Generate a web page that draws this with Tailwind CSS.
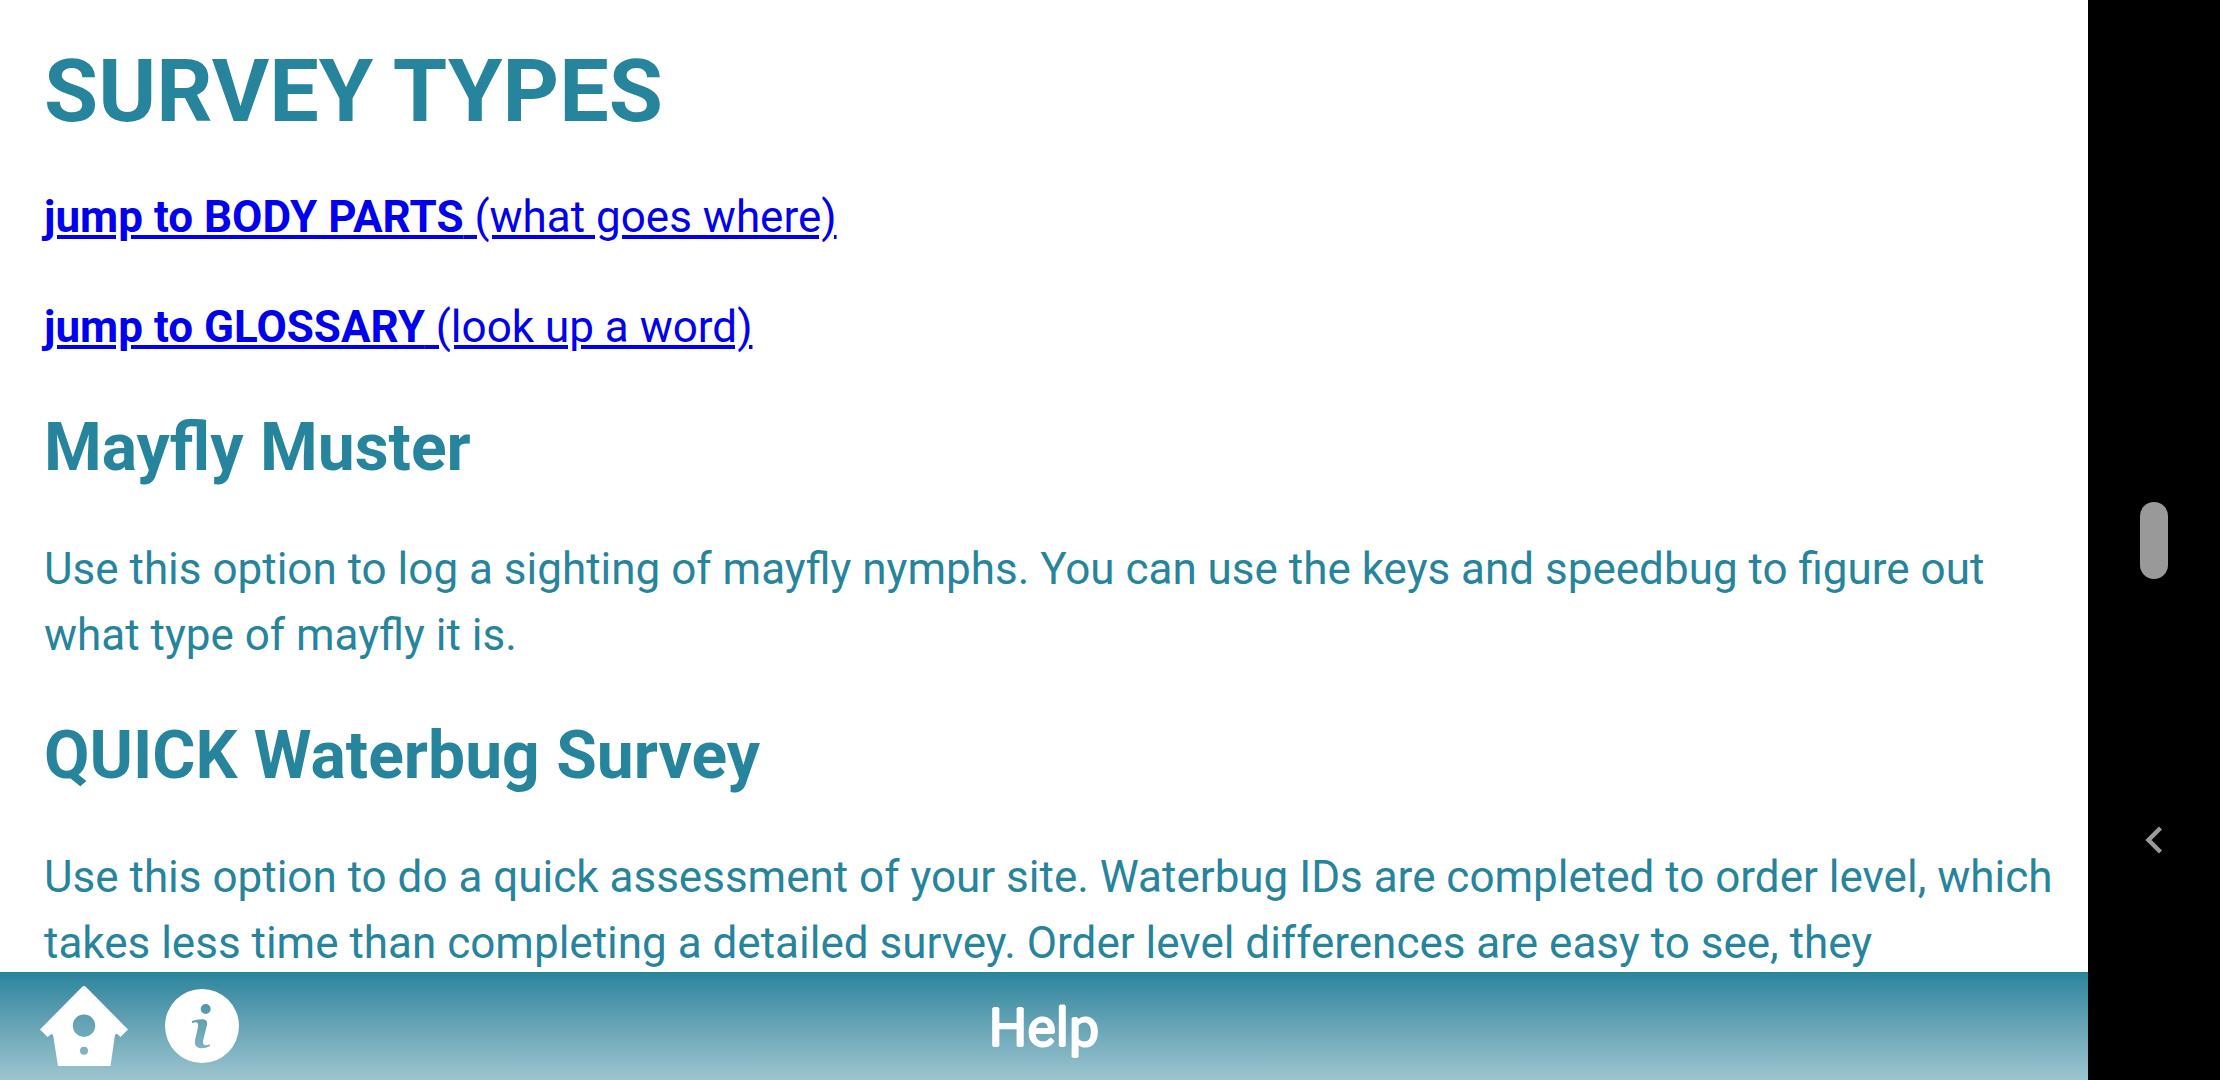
<!DOCTYPE html>
<html lang="en">
<head>
<meta charset="utf-8">
<meta name="viewport" content="width=device-width, initial-scale=1">
<title>Help</title>
<script src="https://cdn.jsdelivr.net/npm/@tailwindcss/browser@4"></script>
</head>
<body class="flex h-screen overflow-hidden bg-black font-['Roboto',sans-serif]">
<div class="flex min-w-0 flex-1 flex-col bg-white">
  <main class="min-h-0 flex-1 overflow-hidden pt-9 pr-8 pl-11 text-[44px] leading-[66px] text-[#27849d]">
    <h1 class="mb-[38px] text-[88px] leading-[110px] font-bold">SURVEY TYPES</h1>
    <p class="mb-11 text-[#0000ee]"><a href="#body-parts" class="underline"><b>jump to BODY PARTS</b> (what goes where)</a></p>
    <p class="mb-11 text-[#0000ee]"><a href="#glossary" class="underline"><b>jump to GLOSSARY</b> (look up a word)</a></p>
    <h2 class="mb-11 text-[66px] leading-[88px] font-bold">Mayfly Muster</h2>
    <p class="mb-11">Use this option to log a sighting of mayfly nymphs. You can use the keys and speedbug to figure out what type of mayfly it is.</p>
    <h2 class="mb-11 text-[66px] leading-[88px] font-bold">QUICK Waterbug Survey</h2>
    <p>Use this option to do a quick assessment of your site. Waterbug IDs are completed to order level, which takes less time than completing a detailed survey. Order level differences are easy to see, they</p>
  </main>
  <footer class="grid h-27 shrink-0 grid-cols-[1fr_auto_1fr] items-center bg-linear-to-b from-[#27849d] to-[#9cc5cf] px-10 text-white">
    <nav class="flex items-center gap-9">
      <button type="button" aria-label="Home">
        <svg class="h-20 w-[88px]" viewBox="0 0 88 80" fill="currentColor" fill-rule="evenodd" aria-hidden="true">
          <path d="M42 1Q44-1 46 1L88 43.500 80.500 51 76.500 47.500Q75 48 74.800 50L70.500 80H18L13.200 50Q13 48 11.500 48L7.500 51 0 43.500ZM44 28.500a11.200 11.200 0 1 0 0 22.400a11.200 11.200 0 1 0 0-22.400ZM44 60.700a4 4 0 1 0 0 8a4 4 0 1 0 0-8Z"/>
        </svg>
      </button>
      <button type="button" aria-label="Information">
        <svg class="h-[76px] w-[76px]" viewBox="0 0 76 76" fill="currentColor" fill-rule="evenodd" aria-hidden="true">
          <path d="M38 1a37 37 0 1 0 0 74a37 37 0 1 0 0-74ZM41.700 16a5 5 0 1 1 0 10a5 5 0 1 1 0-10ZM28 33Q33 31 39 31.200Q44 31.600 43 37L39 53Q38.500 57 41 57.300Q43.500 57.500 45.800 56.300L46 58Q42 60.300 37 60.200Q29.500 60 31.200 51.500L34 39Q34.600 34.500 32 34.300L28 35Z"/>
        </svg>
      </button>
    </nav>
    <div class="pt-1 text-[54px] leading-[66px] [text-shadow:0_1px_0_#fff,0_-1px_0_#fff,1px_0_0_#fff,-1px_0_0_#fff]">Help</div>
  </footer>
</div>
<aside class="grid w-33 shrink-0 grid-rows-[13fr_10fr_10fr_3fr] place-items-center bg-black text-[#999999]">
  <button type="button" aria-label="Home screen" class="row-start-2 h-[77px] w-7 rounded-full bg-[#999999]"></button>
  <button type="button" aria-label="Back" class="row-start-3">
    <svg class="h-7 w-[18px]" viewBox="0 0 18 28" fill="none" stroke="currentColor" stroke-width="4.500" aria-hidden="true"><path d="M15.500 2 3.500 14l12 12"/></svg>
  </button>
</aside>
</body>
</html>
